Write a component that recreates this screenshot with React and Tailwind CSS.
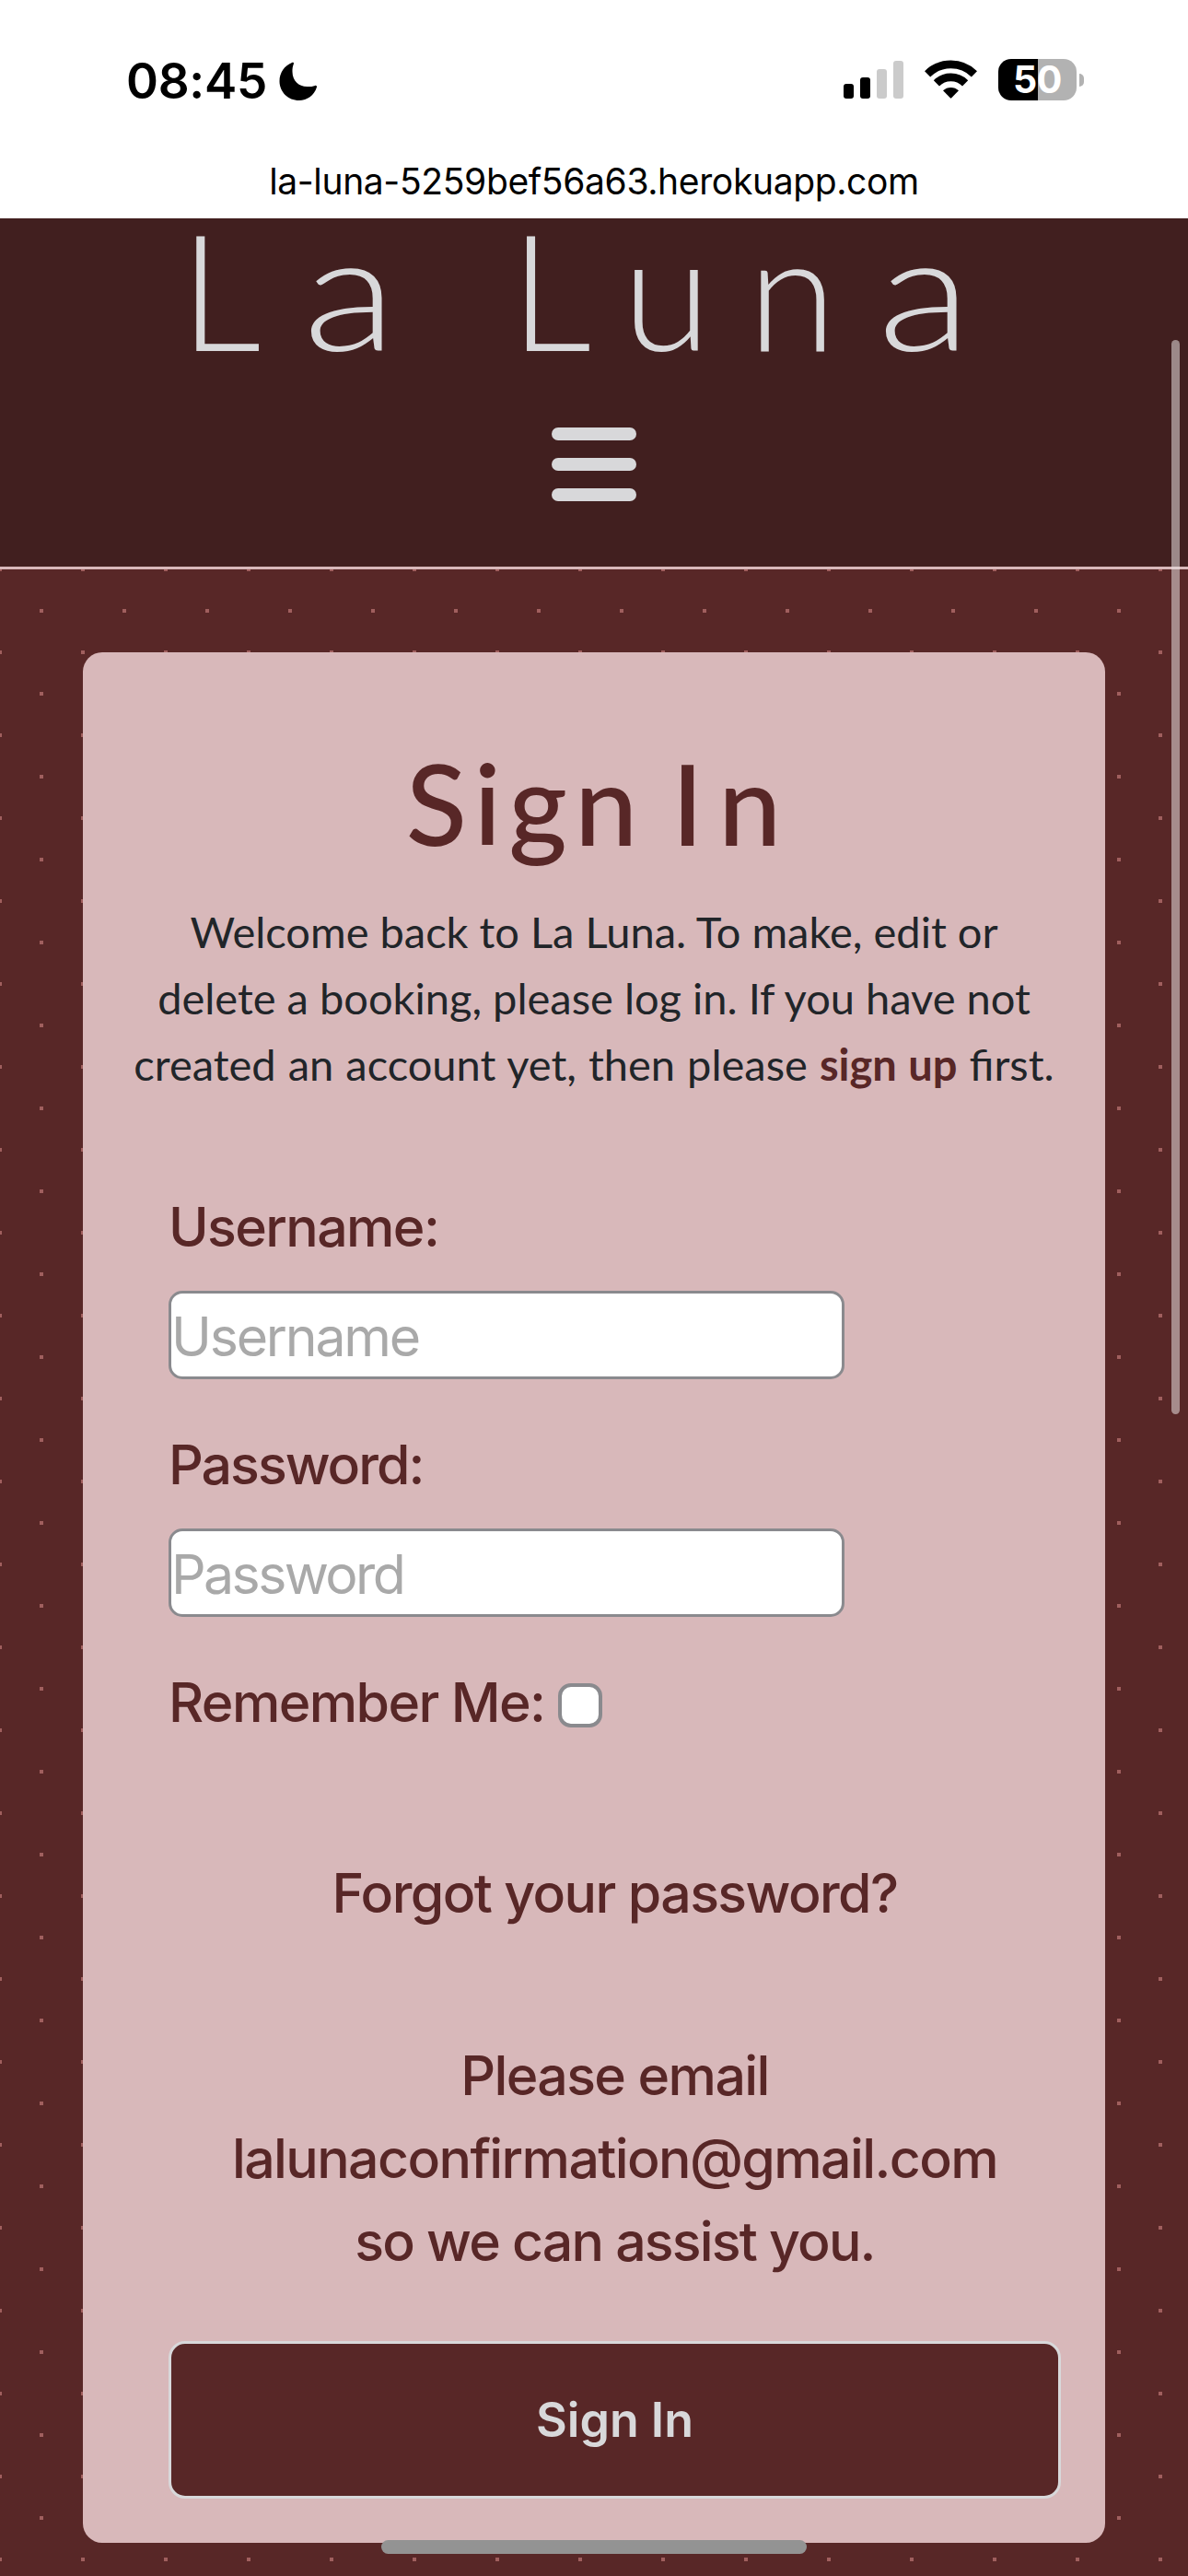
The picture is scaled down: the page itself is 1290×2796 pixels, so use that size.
const ui = "font-[Inter,sans-serif]";
const display = "font-[Lato,sans-serif]";

function MoonIcon() {
  return (
    <svg className="ml-[13px] mt-[67px] h-[43px] w-[42px]" viewBox="0 0 42 43" fill="currentColor">
      <path d="M14 1.1C14.8.6 16.4.9 15.9 2.2 14.7 5 14.4 8 14.5 11c.2 9.500 6.500 15.800 16 16.100 3 .1 6-.3 8.600-1.200 1.400-.5 2.200.5 1.800 1.800C38 36.500 30.500 42 21.800 42 9.800 42 .5 32.800.5 21 .5 12 6 4.300 14 1.100Z" />
    </svg>
  );
}

function SignalIcon() {
  return (
    <div className="mt-[66px] flex h-[41px] items-end gap-[7px]">
      <span className="h-4 w-[11px] rounded-[3px] bg-black" />
      <span className="h-[23px] w-[11px] rounded-[3px] bg-black" />
      <span className="h-8 w-[11px] rounded-[3px] bg-[#cbcbcb]" />
      <span className="h-[41px] w-[11px] rounded-[3px] bg-[#cbcbcb]" />
    </div>
  );
}

function WifiIcon() {
  return (
    <svg className="ml-[23px] mt-[65px] h-[42px] w-[57px]" viewBox="0 0 57 42">
      <g fill="none" stroke="black" strokeWidth="8.800">
        <path d="M3.100 15.300A36.300 36.300 0 0 1 53.900 15.300" />
        <path d="M12.900 25.300A22.200 22.200 0 0 1 44.100 25.300" />
      </g>
      <path d="M20 33.300A12.400 12.400 0 0 1 37 33.300L29.200 41.300Q28.500 42 27.800 41.300Z" fill="black" />
    </svg>
  );
}

function BatteryIcon() {
  return (
    <div className="ml-[23px] mt-16 flex items-center gap-[3px]">
      <div className="flex h-[45px] w-[85px] items-center justify-center rounded-[14px] bg-[linear-gradient(90deg,#000_43px,#b2b2b2_43px)]">
        <span className="text-[41px] font-bold leading-[45px] tracking-[-0.5px] text-white">50</span>
      </div>
      <span className="h-[14px] w-[5px] rounded-r-full bg-[#b2b2b2]" />
    </div>
  );
}

function BrowserTop() {
  return (
    <div className="h-[237px] bg-white text-black">
      <div className="flex h-[171px] items-start pl-[137px] pr-[113px]">
        <span className="mt-[56px] text-[53px] font-semibold leading-[64px] tracking-[-0.3px]">08:45</span>
        <MoonIcon />
        <div className="ml-auto flex items-start">
          <SignalIcon />
          <WifiIcon />
          <BatteryIcon />
        </div>
      </div>
      <p className="text-center text-[39px] leading-[52px] tracking-[-0.36px]">la-luna-5259bef56a63.herokuapp.com</p>
    </div>
  );
}

function SiteHeader() {
  return (
    <header className="h-[381px] border-b-3 border-[#d8b8ba] bg-[#411f1f]">
      <h1 className={`${display} whitespace-nowrap pl-[195px] text-[175px] font-light leading-[152px] tracking-[40px] text-[#d8d8da] [word-spacing:13px]`}>
        L<span className="ml-[5px] inline-block origin-left scale-x-120">a</span> Lun
        <span className="ml-[5px] inline-block origin-left scale-x-120">a</span>
      </h1>
      <button aria-label="Menu" className="mx-auto mt-[75px] flex w-[92px] flex-col gap-[19px]">
        <span className="h-[14px] w-full rounded-full bg-[#d8d8da]" />
        <span className="h-[14px] w-full rounded-full bg-[#d8d8da]" />
        <span className="h-[14px] w-full rounded-full bg-[#d8d8da]" />
      </button>
    </header>
  );
}

const field =
  "mt-6 block h-24 w-[734px] rounded-[15px] border-3 border-[#8a8a8e] bg-white pt-[3px] text-[59px] leading-[87px] placeholder:text-[#a9a9a9] placeholder:opacity-100";

function SignInForm() {
  return (
    <form className="mt-24 pl-[93px] pr-12 text-[59px] font-medium leading-[90px] tracking-[-1.6px] text-[#582727]">
      <label className="block">
        Username:
        <input type="text" placeholder="Username" className={`${field} font-normal tracking-[-2.2px]`} />
      </label>
      <label className="mt-12 block tracking-[-2px]">
        Password:
        <input type="password" placeholder="Password" className={`${field} font-normal tracking-[-2.6px]`} />
      </label>
      <label className="mt-12 flex items-center">
        Remember Me:
        <input type="checkbox" className="ml-[15px] mt-[6px] size-12 appearance-none rounded-[14px] border-4 border-[#8a8a8e] bg-white" />
      </label>
      <p className="mt-[117px] text-center">Forgot your password?</p>
      <p className="mt-[108px] text-center">
        Please email
        <br />
        lalunaconfirmation@gmail.com
        <br />
        <span className="tracking-[-1.8px]">so we can assist you.</span>
      </p>
      <button className="mt-[63px] h-[171px] w-full rounded-[18px] border-3 border-[#d8d8da] bg-[#582727] text-[52px] font-semibold tracking-normal text-[#d8d8da]">
        Sign In
      </button>
    </form>
  );
}

export default function App() {
  return (
    <div className={`${ui} relative h-[2796px] w-[1290px] overflow-hidden bg-[#582727]`}>
      <BrowserTop />
      <SiteHeader />
      <main className="h-[2178px] bg-[radial-gradient(circle,#a05f5e_2.4px,transparent_2.4px),radial-gradient(circle,#a05f5e_2.4px,transparent_2.4px)] bg-[length:90px_90px] bg-[position:0_0,45px_45px] px-[90px] pt-[90px]">
        <section className="h-[2052px] rounded-[21px] bg-[#d8b8ba] pt-[113px]">
          <h2 className={`${display} flex justify-center gap-[29px] pl-4 text-[122px] font-medium leading-[100px] text-[#582727]`}>
            <span className="tracking-[8px]">Sign</span>
            <span className="tracking-[17px]">In</span>
          </h2>
          <p className={`${display} mt-[54px] text-center text-[47px] leading-[72px] text-[#212529]`}>
            Welcome back to La Luna. To make, edit or
            <br />
            delete a booking, please log in. If you have not
            <br />
            <span className="[word-spacing:1px]">
              created an account yet, then please <a className="font-bold text-[#582727]">sign up</a> first.
            </span>
          </p>
          <SignInForm />
        </section>
      </main>
      <div className="absolute right-[9px] top-[369px] h-[1166px] w-[9px] rounded-full bg-[#e8e0e0]/55" />
      <div className="absolute bottom-6 left-[414px] h-[15px] w-[462px] rounded-full bg-[#939393]" />
    </div>
  );
}
